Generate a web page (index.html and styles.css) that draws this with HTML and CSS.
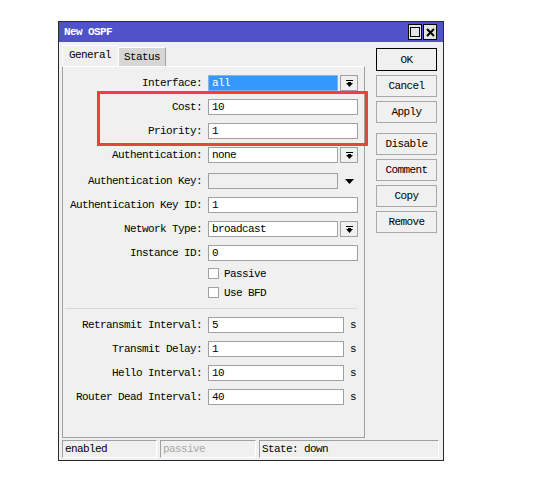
FILE: index.html
```html
<!DOCTYPE html>
<html lang="en">

<head>
    <meta charset="UTF-8">
    <meta name="viewport" content="width=device-width, initial-scale=1.0">
    <title>New OSPF</title>
    <link rel="stylesheet" href="styles.css">
</head>

<body>
    <div class="window">
        <div class="titlebar">
            <span class="title">New OSPF</span>
            <div class="tb-buttons">
                <span class="tb-btn"><span class="max-box"></span></span>
                <span class="tb-btn">
                    <svg width="9" height="9" viewBox="0 0 9 9"><path d="M1 1L8 8M8 1L1 8" stroke="#000" stroke-width="2"/></svg>
                </span>
            </div>
        </div>

        <div class="content">
            <div class="main">
                <div class="tabs">
                    <span class="tab active">General</span>
                    <span class="tab">Status</span>
                </div>
                <div class="panel">
                    <div class="row">
                        <label>Interface:</label>
                        <span class="field short selected">all</span>
                        <span class="drop"><svg width="7" height="7" viewBox="0 0 7 7"><path d="M0 0h7v1H0z M2 2h3v1h2L3.5 7L0 3h2z" fill="#000"/></svg></span>
                    </div>
                    <div class="row">
                        <label>Cost:</label>
                        <span class="field">10</span>
                    </div>
                    <div class="row">
                        <label>Priority:</label>
                        <span class="field">1</span>
                    </div>
                    <div class="row wide">
                        <label>Authentication:</label>
                        <span class="field short">none</span>
                        <span class="drop"><svg width="7" height="7" viewBox="0 0 7 7"><path d="M0 0h7v1H0z M2 2h3v1h2L3.5 7L0 3h2z" fill="#000"/></svg></span>
                    </div>
                    <div class="row">
                        <label>Authentication Key:</label>
                        <span class="field short disabled"></span>
                        <span class="arrow"><svg width="9" height="5" viewBox="0 0 9 5"><path d="M0 0h9L4.5 5z" fill="#000"/></svg></span>
                    </div>
                    <div class="row">
                        <label>Authentication Key ID:</label>
                        <span class="field">1</span>
                    </div>
                    <div class="row">
                        <label>Network Type:</label>
                        <span class="field short">broadcast</span>
                        <span class="drop"><svg width="7" height="7" viewBox="0 0 7 7"><path d="M0 0h7v1H0z M2 2h3v1h2L3.5 7L0 3h2z" fill="#000"/></svg></span>
                    </div>
                    <div class="row">
                        <label>Instance ID:</label>
                        <span class="field">0</span>
                    </div>
                    <div class="check-row first">
                        <span class="box"></span>
                        <span>Passive</span>
                    </div>
                    <div class="check-row">
                        <span class="box"></span>
                        <span>Use BFD</span>
                    </div>

                    <hr class="sep">

                    <div class="row">
                        <label>Retransmit Interval:</label>
                        <span class="field unit">5</span>
                        <span class="suffix">s</span>
                    </div>
                    <div class="row">
                        <label>Transmit Delay:</label>
                        <span class="field unit">1</span>
                        <span class="suffix">s</span>
                    </div>
                    <div class="row">
                        <label>Hello Interval:</label>
                        <span class="field unit">10</span>
                        <span class="suffix">s</span>
                    </div>
                    <div class="row">
                        <label>Router Dead Interval:</label>
                        <span class="field unit">40</span>
                        <span class="suffix">s</span>
                    </div>
                </div>
            </div>

            <div class="side">
                <button class="btn default">OK</button>
                <button class="btn">Cancel</button>
                <button class="btn">Apply</button>
                <button class="btn gap">Disable</button>
                <button class="btn">Comment</button>
                <button class="btn">Copy</button>
                <button class="btn">Remove</button>
            </div>
        </div>

        <div class="statusbar">
            <span class="seg s1">enabled</span>
            <span class="seg s2 muted">passive</span>
            <span class="seg s3">State: down</span>
        </div>
    </div>

    <div class="highlight"></div>
</body>

</html>
```

FILE: styles.css
```css
/* OSPF window */
body {
    margin: 0;
    padding: 21px 0 0 58px;
    background: #fff;
    font-family: "Liberation Mono", "DejaVu Sans Mono", monospace;
    font-size: 11px;
    letter-spacing: -0.6px;
    color: #000;
}

.window {
    width: 384px;
    height: 438px;
    border: 1px solid #2a2a2a;
    background: #f0f0f0;
    display: flex;
    flex-direction: column;
}

.titlebar {
    height: 20px;
    background: #4f52c8;
    display: flex;
    align-items: center;
    justify-content: space-between;
    padding: 0 6px 0 5px;
}

.title {
    color: #fff;
    font-weight: bold;
}

.tb-buttons {
    display: flex;
    gap: 1px;
}

.tb-btn {
    width: 12px;
    height: 14px;
    border: 1px solid #000;
    background: #e4e4e4;
    display: flex;
    align-items: center;
    justify-content: center;
}

.max-box {
    width: 8px;
    height: 8px;
    border: 1px solid #000;
}

.content {
    display: flex;
    padding: 3px 0 0 3px;
}

.tabs {
    display: flex;
    align-items: flex-end;
    height: 21px;
}

.tab {
    height: 18px;
    line-height: 18px;
    padding: 0 5px;
    background: #d6d6d6;
    border-top: 1px solid #fff;
    border-left: 1px solid #fff;
    border-right: 1px solid #a0a0a0;
}

.tab.active {
    height: 20px;
    line-height: 19px;
    padding: 0 7px 0 6px;
    background: #f0f0f0;
    border-right: none;
}

.panel {
    width: 301px;
    height: 362px;
    border: 1px solid #a0a0a0;
    border-top-color: #fff;
    padding-top: 8px;
}

.row {
    display: flex;
    align-items: center;
    height: 16px;
    margin-bottom: 8px;
}

.row.wide {
    margin-bottom: 10px;
}

.row label {
    width: 139px;
    text-align: right;
    margin-right: 6px;
}

.field {
    box-sizing: border-box;
    width: 150px;
    height: 16px;
    line-height: 14px;
    border: 1px solid #a0a0a0;
    background: #fff;
    padding-left: 3px;
    white-space: pre;
}

.field.short {
    width: 130px;
}

.field.unit {
    width: 136px;
}

.field.selected {
    background: #3399ff;
    border-color: #8ab4e0;
    color: #fff;
}

.field.disabled {
    background: #f0f0f0;
}

.drop {
    box-sizing: border-box;
    width: 18px;
    height: 16px;
    margin-left: 2px;
    border: 1px solid #a0a0a0;
    background: #f0f0f0;
    display: flex;
    align-items: center;
    justify-content: center;
}

.arrow {
    width: 18px;
    margin-left: 2px;
    display: flex;
    justify-content: center;
}

.suffix {
    margin-left: 6px;
}

.check-row {
    display: flex;
    align-items: center;
    height: 19px;
    padding-left: 145px;
    gap: 5px;
}

.check-row.first {
    margin-top: -5px;
}

.box {
    box-sizing: border-box;
    width: 11px;
    height: 11px;
    border: 1px solid #a0a0a0;
    background: #fff;
}

.sep {
    margin: 6px 7px 8px 2px;
    border: none;
    border-top: 1px solid #d8d8d8;
    height: 0;
}

.side {
    display: flex;
    flex-direction: column;
    gap: 4px;
    margin: 3px 0 0 11px;
}

.btn {
    width: 61px;
    height: 22px;
    padding: 0;
    font: inherit;
    letter-spacing: inherit;
    background: #f0f0f0;
    border: 1px solid #a8a8a8;
    color: #000;
}

.btn.default {
    height: 23px;
    border-color: #000;
}

.btn.gap {
    margin-top: 6px;
}

.statusbar {
    display: flex;
    gap: 3px;
    margin: 2px 0 0 3px;
}

.seg {
    box-sizing: border-box;
    height: 18px;
    line-height: 16px;
    padding-left: 2px;
    border: 1px solid #fff;
    border-top-color: #a0a0a0;
    border-left-color: #a0a0a0;
}

.s1 { width: 95px; }
.s2 { width: 96px; }
.s3 { width: 180px; }

.muted {
    color: #a8a8a8;
}

.highlight {
    position: absolute;
    left: 97px;
    top: 91px;
    width: 265px;
    height: 49px;
    border: 3px solid #ef4040;
}
```
